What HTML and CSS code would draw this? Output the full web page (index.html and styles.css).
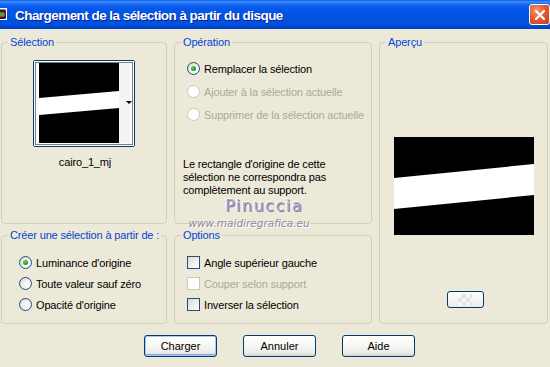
FILE: index.html
```html
<!DOCTYPE html>
<html lang="fr">
<head>
<meta charset="utf-8">
<title>Chargement de la sélection à partir du disque</title>
<link rel="stylesheet" href="styles.css">
</head>
<body>
<div class="window">
  <div class="titlebar">
    <span class="appicon"></span>
    <span class="title">Chargement de la sélection à partir du disque</span>
    <span class="close"><svg width="12" height="12" viewBox="0 0 12 12"><path d="M2 2 L10 10 M10 2 L2 10" stroke="#fff" stroke-width="2.2" stroke-linecap="round"/></svg></span>
  </div>
  <div class="body">
    <div class="groups">
      <fieldset class="grp sel">
        <legend>Sélection</legend>
        <div class="thumb">
          <svg width="100" height="85" viewBox="0 0 100 85">
            <rect x="0" y="0" width="100" height="85" fill="#fbfbfb"/>
            <rect x="85" y="2" width="11" height="80" fill="#f3f3f1"/>
            <rect x="5" y="2" width="80" height="80" fill="#000"/>
            <polygon points="5,37 85,30 85,47 5,54" fill="#fff"/>
            <polygon points="92,40 98,40 95,43" fill="#000"/>
            <rect x="1.5" y="1.5" width="97" height="82" fill="none" stroke="#000" stroke-width="1" stroke-dasharray="1 1"/>
          </svg>
        </div>
        <div class="thumbname">cairo_1_mj</div>
      </fieldset>

      <fieldset class="grp op">
        <legend>Opération</legend>
        <div class="opt first"><span class="radio on"></span><span>Remplacer la sélection</span></div>
        <div class="opt dis"><span class="radio off"></span><span>Ajouter à la sélection actuelle</span></div>
        <div class="opt dis"><span class="radio off"></span><span>Supprimer de la sélection actuelle</span></div>
        <p class="note">Le rectangle d'origine de cette<br>sélection ne correspondra pas<br>complètement au support.</p>
      </fieldset>

      <fieldset class="grp prev">
        <legend>Aperçu</legend>
        <div class="preview">
          <svg width="140" height="98" viewBox="0 0 140 98">
            <rect width="140" height="98" fill="#000"/>
            <polygon points="0,41 140,27 140,58 0,72" fill="#fff"/>
          </svg>
        </div>
        <div class="smallbtn"><span class="checker"></span></div>
      </fieldset>

      <fieldset class="grp create">
        <legend>Créer une sélection à partir de :</legend>
        <div class="opt first2"><span class="radio on"></span><span>Luminance d'origine</span></div>
        <div class="opt row2"><span class="radio"></span><span>Toute valeur sauf zéro</span></div>
        <div class="opt row2"><span class="radio"></span><span>Opacité d'origine</span></div>
      </fieldset>

      <fieldset class="grp opts">
        <legend>Options</legend>
        <div class="opt first2"><span class="check"></span><span>Angle supérieur gauche</span></div>
        <div class="opt row2 dis"><span class="check off"></span><span>Couper selon support</span></div>
        <div class="opt row2"><span class="check"></span><span>Inverser la sélection</span></div>
      </fieldset>
    </div>

    <div class="buttons">
      <button class="btn default">Charger</button>
      <button class="btn">Annuler</button>
      <button class="btn">Aide</button>
    </div>

    <div class="watermark">
      <div class="wm-name">Pinuccia</div>
      <div class="wm-url">www.maidiregrafica.eu</div>
    </div>
  </div>
</div>
</body>
</html>
```

FILE: styles.css
```css
html, body {
  margin: 0;
  padding: 0;
  width: 550px;
  height: 367px;
  overflow: hidden;
  background: #ece9d8;
}

.window {
  width: 550px;
  height: 367px;
  font-family: "Liberation Sans", Arial, sans-serif;
  font-size: 11px;
  letter-spacing: -0.15px;
  color: #000;
}

.titlebar {
  height: 29px;
  position: relative;
  display: flex;
  align-items: center;
  background: linear-gradient(to bottom, #0a5deb 0px, #3d8ff9 2px, #1a6af3 4px, #0558ea 8px, #0054e3 16px, #0052df 24px, #0045cc 28px, #003fbe 29px);
}

.appicon {
  position: absolute;
  left: -5px;
  top: 8px;
  width: 12px;
  height: 12px;
  background: radial-gradient(circle at 60% 55%, #3ea640 0 2px, #c33 2px 3px, #223 3px 5px, #888 5px);
  border: 1px solid #fff;
  box-sizing: border-box;
}

.title {
  margin-left: 15px;
  margin-top: 1px;
  color: #fff;
  font-family: "Liberation Sans", Arial, sans-serif;
  font-weight: bold;
  font-size: 13.5px;
  letter-spacing: -0.55px;
  text-shadow: 1px 1px 0 #0a1e8c;
}

.close {
  position: absolute;
  left: 529px;
  top: 4px;
  width: 21px;
  height: 21px;
  box-sizing: border-box;
  border: 1px solid #fff;
  border-radius: 3px;
  background: radial-gradient(circle at 35% 30%, #f19a7c 0, #e45b36 45%, #c33d1a 100%);
  display: flex;
  align-items: center;
  justify-content: center;
}

.body {
  position: relative;
  padding: 7px 0 0 1px;
}

.groups {
  display: grid;
  grid-template-columns: 166px 198px 169px;
  grid-template-rows: 188px 95px;
  column-gap: 7px;
  row-gap: 5px;
}

.grp {
  margin: 0;
  padding: 0;
  border: 1px solid #d0d0bf;
  border-radius: 4px;
  min-width: 0;
  box-sizing: border-box;
}

.grp legend {
  margin-left: 6px;
  padding: 0 2px;
  font-size: 11px;
  line-height: 13px;
  color: #0046d5;
  white-space: nowrap;
}

.sel { grid-column: 1; grid-row: 1; display: flex; flex-direction: column; align-items: center; }
.op { grid-column: 2; grid-row: 1; }
.prev { grid-column: 3; grid-row: 1 / span 2; display: flex; flex-direction: column; align-items: center; }
.create { grid-column: 1; grid-row: 2; }
.opts { grid-column: 2; grid-row: 2; }

.op .opt, .opts .opt { margin-left: 12px; }
.create .opt { margin-left: 17px; }

.thumb {
  margin-top: 11px;
  width: 100px;
  height: 85px;
  border: 1px solid #003c74;
  border-radius: 2px;
  line-height: 0;
}

.thumbname {
  margin-top: 9px;
  line-height: 13px;
  margin-left: 2px;
}

.opt {
  display: flex;
  align-items: center;
  height: 23px;
  gap: 4px;
}
.op .opt.first { margin-top: 8px; }
.opt.dis { color: #aca899; }

.first2 { margin-top: 10px; height: 21px; }
.opt.row2 { height: 21px; }

.note {
  margin: 32px 0 0 8px;
  line-height: 13px;
}

.radio {
  width: 13px;
  height: 13px;
  box-sizing: border-box;
  border-radius: 50%;
  border: 1px solid #1c5180;
  background: radial-gradient(circle at 65% 65%, #ffffff 0, #f3f2ec 40%, #d6d3c6 100%);
  display: flex;
  align-items: center;
  justify-content: center;
  flex: none;
}
.radio.on::after {
  content: "";
  width: 5px;
  height: 5px;
  border-radius: 50%;
  background: radial-gradient(circle at 35% 35%, #5fd35f, #21a121 60%, #127a12);
}
.radio.off {
  border-color: #cac8bb;
  background: #fff;
}

.check {
  width: 13px;
  height: 13px;
  box-sizing: border-box;
  border: 1px solid #1c5180;
  background: linear-gradient(135deg, #dcdad0 0%, #eeede6 50%, #ffffff 100%);
  flex: none;
}
.check.off {
  border-color: #cac8bb;
  background: #fff;
}

.preview {
  margin-top: 88px;
  margin-left: 1px;
  line-height: 0;
}

.smallbtn {
  margin-top: 56px;
  margin-left: 3px;
  width: 37px;
  height: 17px;
  box-sizing: border-box;
  border: 1px solid #003c74;
  border-radius: 3px;
  background: linear-gradient(to bottom, #ffffff, #ecebe6);
  display: flex;
  align-items: center;
  justify-content: center;
}
.checker {
  width: 14px;
  height: 11px;
  background:
    conic-gradient(#e2e2e2 25%, #f7f7f7 0 50%, #e2e2e2 0 75%, #f7f7f7 0) 0 0 / 8px 8px;
}

.buttons {
  display: flex;
  gap: 26px;
  margin-top: 11px;
  padding-left: 143px;
}

.btn {
  width: 73px;
  height: 22px;
  margin: 0;
  padding: 0;
  box-sizing: border-box;
  border: 1px solid #003c74;
  border-radius: 3px;
  background: linear-gradient(to bottom, #ffffff 0%, #f8f8f5 40%, #ecebe6 85%, #d6d0c5 100%);
  font-family: "Liberation Sans", Arial, sans-serif;
  font-size: 11px;
  color: #000;
}
.btn.default {
  box-shadow: inset 0 0 0 1px #a8c8f4, inset 0 -1px 0 1px #85a8e0;
}

.watermark {
  position: absolute;
  left: 188px;
  top: 170px;
  width: 122px;
  text-align: center;
  pointer-events: none;
}
.wm-name {
  font-family: "DejaVu Sans", sans-serif;
  font-size: 16px;
  letter-spacing: 1.5px;
  line-height: 14px;
  color: #aaa6c9;
  text-shadow: 1px 1px 0 #7c78a0, -1px -1px 0 #ffffff;
  margin-left: 30px;
}
.wm-url {
  font-family: "DejaVu Sans", sans-serif;
  font-style: italic;
  font-size: 10.5px;
  line-height: 10px;
  margin-top: 5px;
  color: #8d8aa6;
  text-shadow: 1px 1px 0 #ffffff;
  letter-spacing: 0;
}
```
